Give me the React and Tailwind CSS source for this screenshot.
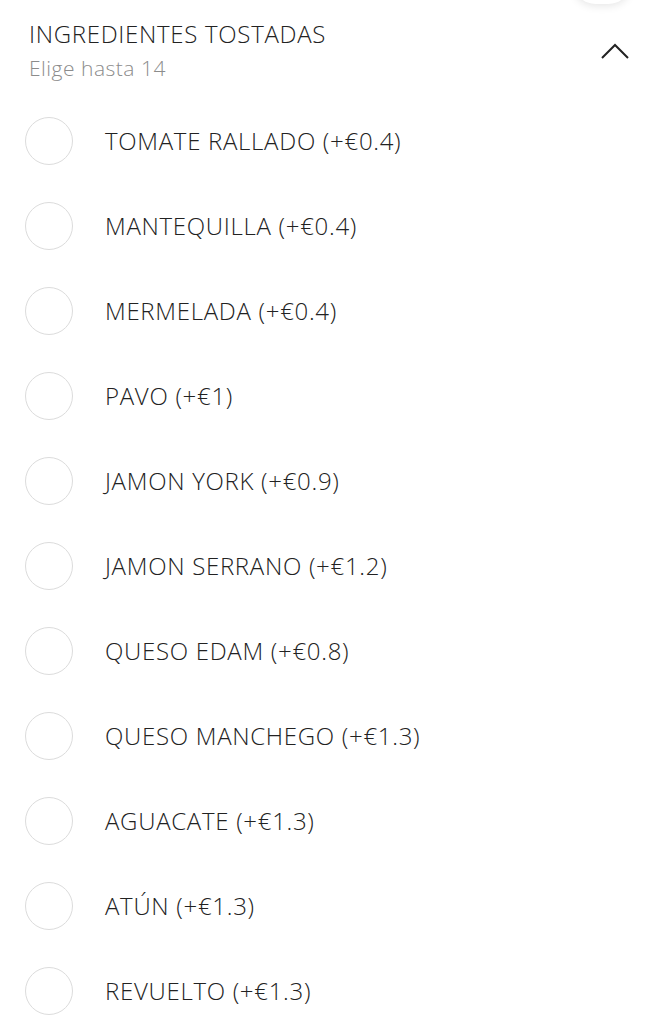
import { useState } from 'react'

const ITEMS = [
  'TOMATE RALLADO (+€0.4)',
  'MANTEQUILLA (+€0.4)',
  'MERMELADA (+€0.4)',
  'PAVO (+€1)',
  'JAMON YORK (+€0.9)',
  'JAMON SERRANO (+€1.2)',
  'QUESO EDAM (+€0.8)',
  'QUESO MANCHEGO (+€1.3)',
  'AGUACATE (+€1.3)',
  'ATÚN (+€1.3)',
  'REVUELTO (+€1.3)',
]

export default function App() {
  const [picked, setPicked] = useState([])

  const toggle = (i) => {
    setPicked(p => p.includes(i) ? p.filter(x => x !== i) : [...p, i])
  }

  return (
    <div className="relative min-h-[1024px] bg-white overflow-hidden text-[#222]" style={{ fontFamily: '"Open Sans", sans-serif' }}>
      {/* sombra del botón de arriba */}
      <div className="absolute -top-[44px] left-[572px] w-[60px] h-[48px] rounded-full bg-white shadow-[0_2px_8px_rgba(0,0,0,0.10)]" />

      {/* Cabecera */}
      <div className="flex items-start justify-between pl-[29px] pr-[34px] pt-[18px]">
        <div>
          <div className="text-[24px] leading-[32px] font-light tracking-[0.7px]">INGREDIENTES TOSTADAS</div>
          <div className="text-[21px] leading-[28px] font-light tracking-[0.5px] text-[#8c8c8c] mt-[4px]">Elige hasta 14</div>
        </div>
        <svg width="30" height="18" viewBox="0 0 30 18" className="mt-[24px]">
          <path d="M2 16 L15 3 L28 16" fill="none" stroke="#222" strokeWidth="2" />
        </svg>
      </div>

      {/* Lista */}
      <div className="flex flex-col mt-[16px]">
        {ITEMS.map((label, i) => (
          <button key={label} onClick={() => toggle(i)} className="flex items-center h-[85px] pl-[25px] text-left">
            <span className={`w-[48px] h-[48px] rounded-full border-[1.5px] shrink-0 ${picked.includes(i) ? 'border-[#222] bg-[#222]' : 'border-[#dcdcdc]'}`} />
            <span className="ml-[32px] text-[24px] font-light tracking-[0.7px] text-[#222]">{label}</span>
          </button>
        ))}
      </div>
    </div>
  )
}
